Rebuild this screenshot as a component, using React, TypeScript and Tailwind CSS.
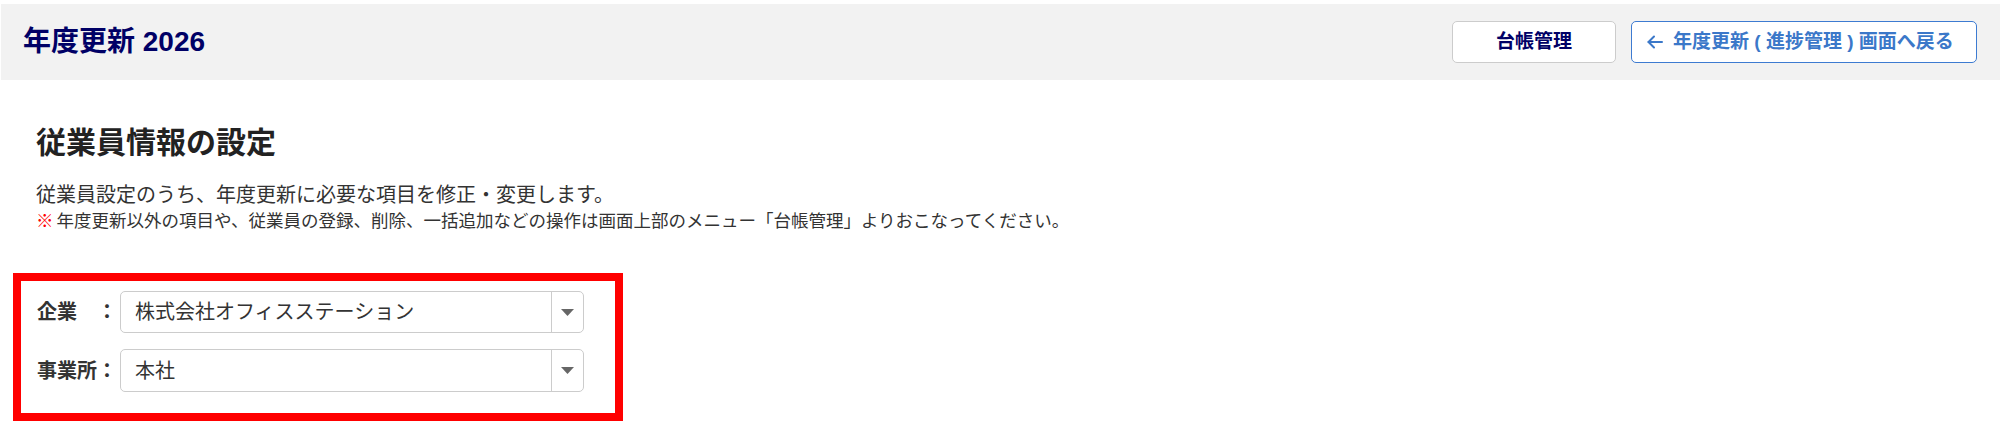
import React from "react";

const FONT = { fontFamily: '"Liberation Sans", "Noto Sans CJK JP", sans-serif' };

function SelectBox({ value }: { value: string }) {
  return (
    <div className="flex h-full w-[464px] items-stretch rounded-[5px] border border-[#cccccc] bg-white">
      <div className="flex flex-1 items-center pl-[14px] text-[20px] text-[#333333]">{value}</div>
      <div className="flex w-[32px] items-center justify-center border-l border-[#cccccc]">
        <svg width="13" height="7" viewBox="0 0 13 7">
          <polygon points="0,0 13,0 6.5,7" fill="#666666" />
        </svg>
      </div>
    </div>
  );
}

export default function App() {
  return (
    <div className="min-h-[422px] w-[2000px] bg-white pt-[4px]" style={FONT}>
      <header className="ml-[1px] flex h-[76px] items-center justify-between bg-[#f2f2f2] pl-[22px] pr-[23px]">
        <h1 className="text-[28px] font-bold leading-none text-[#000066]">年度更新 2026</h1>
        <div className="flex items-center gap-[15px]">
          <button className="flex h-[42px] w-[164px] items-center justify-center rounded-[5px] border border-[#cccccc] bg-white text-[19px] font-bold text-[#000066]">
            台帳管理
          </button>
          <button className="flex h-[42px] w-[346px] items-center gap-[10px] rounded-[5px] border border-[#3d7bd1] bg-white pl-[15px] text-[19px] font-bold text-[#3b78c9]">
            <svg width="16" height="14" viewBox="0 0 16 14" fill="none" stroke="#3b78c9" strokeWidth="2" strokeLinecap="round" strokeLinejoin="round">
              <path d="M15 7H1.5" />
              <path d="M7 1.5L1.5 7L7 12.5" />
            </svg>
            <span>年度更新 ( 進捗管理 ) 画面へ戻る</span>
          </button>
        </div>
      </header>

      <main className="pl-[36px] pt-[43px]">
        <h2 className="text-[30px] font-bold leading-[40px] text-[#222222]">従業員情報の設定</h2>
        <p className="mt-[18px] text-[20px] leading-[28px] text-[#333333]">
          従業員設定のうち、年度更新に必要な項目を修正・変更します。
        </p>
        <p className="text-[17.5px] leading-[25px] text-[#333333]">
          <span className="mr-[3px] text-[#ff0000]">※</span>
          年度更新以外の項目や、従業員の登録、削除、一括追加などの操作は画面上部のメニュー「台帳管理」よりおこなってください。
        </p>
      </main>

      <section className="ml-[13px] mt-[39px] box-border h-[148px] w-[610px] border-8 border-[#ff0000] pl-[16px] pt-[10px]">
        <div className="flex flex-col gap-[16px]">
          <div className="flex h-[42px] items-center gap-[3px]">
            <span className="w-[80px] text-[20px] font-bold text-[#333333]">企業　：</span>
            <SelectBox value="株式会社オフィスステーション" />
          </div>
          <div className="flex h-[43px] items-center gap-[3px]">
            <span className="w-[80px] text-[20px] font-bold text-[#333333]">事業所：</span>
            <SelectBox value="本社" />
          </div>
        </div>
      </section>
    </div>
  );
}
